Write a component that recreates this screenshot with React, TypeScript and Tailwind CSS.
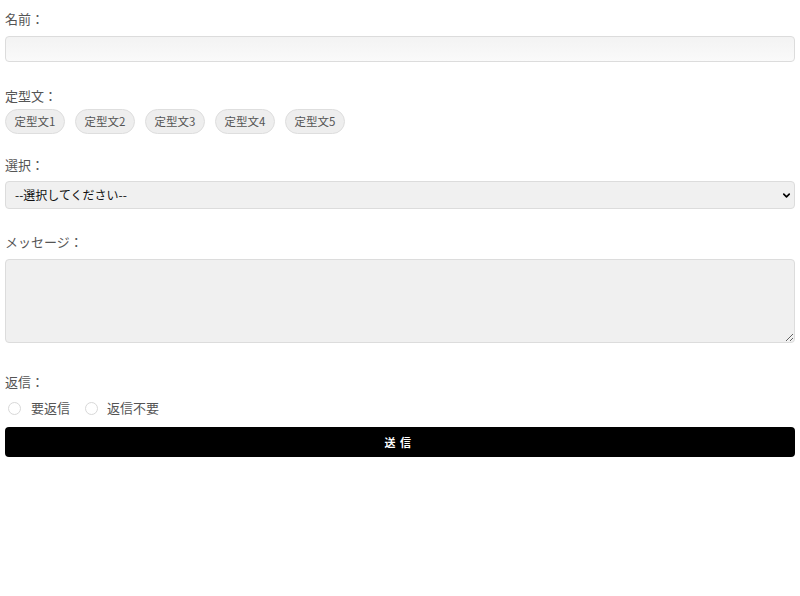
import { ChevronDown } from "lucide-react";

const presets = ["定型文1", "定型文2", "定型文3", "定型文4", "定型文5"];

function Label({ children }: { children: React.ReactNode }) {
  return <div className="text-[13px] leading-5 text-[#555]">{children}</div>;
}

export default function App() {
  return (
    <div
      className="min-h-[596px] w-full bg-white px-[5px] pt-[9px]"
      style={{ fontFamily: '"Noto Sans CJK JP", "Noto Sans", sans-serif' }}
    >
      <Label>名前：</Label>
      <input
        type="text"
        className="mt-[7px] block h-[26px] w-full rounded-[4px] border border-[#dcdcdc] bg-gradient-to-b from-[#f3f3f3] to-[#fafafa] px-2 text-[13px] outline-none"
      />

      <div className="mt-[24px]">
        <Label>定型文：</Label>
      </div>
      <div className="mt-[3px] flex gap-[10px]">
        {presets.map((p) => (
          <button
            key={p}
            className="h-[25px] w-[60px] rounded-full border border-[#dedede] bg-[#eeeeee] text-[11.5px] text-[#555]"
          >
            {p}
          </button>
        ))}
      </div>

      <div className="mt-[21px]">
        <Label>選択：</Label>
      </div>
      <div className="relative mt-[6px]">
        <select className="block h-[28px] w-full appearance-none rounded-[4px] border border-[#dcdcdc] bg-[#f0f0f0] pl-[9px] text-[12px] text-[#111] outline-none">
          <option>--選択してください--</option>
        </select>
        <ChevronDown
          className="pointer-events-none absolute right-[3px] top-[9px] h-[11px] w-[11px] text-black"
          strokeWidth={3.5}
        />
      </div>

      <div className="mt-[23px]">
        <Label>メッセージ：</Label>
      </div>
      <textarea className="mt-[7px] block h-[84px] w-full rounded-[4px] border border-[#dcdcdc] bg-[#f0f0f0] p-2 text-[13px] outline-none" />

      <div className="mt-[29px]">
        <Label>返信：</Label>
      </div>
      <div className="mt-[6px] flex h-[20px] items-center text-[13px] text-[#555]">
        <label className="flex items-center">
          <input
            type="radio"
            name="reply"
            className="ml-[3px] h-[13px] w-[13px] appearance-none rounded-full border border-[#d8d8d8] bg-white"
          />
          <span className="ml-[10px]">要返信</span>
        </label>
        <label className="ml-[15px] flex items-center">
          <input
            type="radio"
            name="reply"
            className="h-[13px] w-[13px] appearance-none rounded-full border border-[#d8d8d8] bg-white"
          />
          <span className="ml-[9px]">返信不要</span>
        </label>
      </div>

      <button className="mt-[9px] block h-[30px] w-full rounded-[4px] bg-black text-[11px] font-bold tracking-[0.4em] text-white">
        送信
      </button>
    </div>
  );
}
